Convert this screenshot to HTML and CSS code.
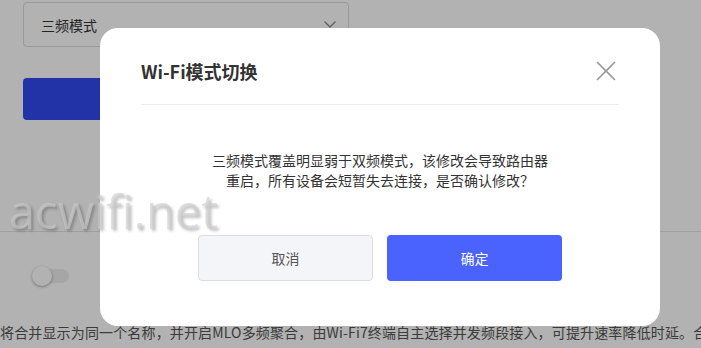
FILE: index.html
```html
<!DOCTYPE html>
<html lang="zh-CN">
<head>
  <meta charset="UTF-8">
  <title>Wi-Fi模式切换</title>
  <link rel="stylesheet" href="styles.css">
</head>
<body>

  <div class="page">
    <div class="select">
      <span>三频模式</span>
      <svg class="chevron" width="12" height="7" viewBox="0 0 12 7">
        <path d="M0.5 0.5 L6 6 L11.5 0.5" fill="none" stroke="#888" stroke-width="1.3"/>
      </svg>
    </div>
    <button class="save-btn">保存</button>

    <div class="divider"></div>

    <div class="switch-row">
      <span class="switch"><span class="knob"></span></span>
    </div>

    <p class="hint">将合并显示为同一个名称，并开启MLO多频聚合，由Wi-Fi7终端自主选择并发频段接入，可提升速率降低时延。合</p>
  </div>

  <div class="mask"></div>

  <div class="dialog">
    <div class="dialog-head">
      <h3 class="dialog-title">Wi-Fi模式切换</h3>
      <svg class="close" width="20" height="20" viewBox="0 0 20 20">
        <path d="M1 1 L19 19 M19 1 L1 19" stroke="#999" stroke-width="1.6"/>
      </svg>
    </div>
    <div class="dialog-body">
      <p class="dialog-text">三频模式覆盖明显弱于双频模式，该修改会导致路由器重启，所有设备会短暂失去连接，是否确认修改？</p>
    </div>
    <div class="dialog-foot">
      <button class="btn btn-cancel">取消</button>
      <button class="btn btn-ok">确定</button>
    </div>
  </div>

  <div class="watermark">acwifi.net</div>

</body>
</html>
```

FILE: styles.css
```css
body {
  margin: 0;
  font-family: "Noto Sans CJK SC", "Liberation Sans", sans-serif;
  background: #ffffff;
  overflow: hidden;
}
.page {
  padding-top: 2px;
}
.select {
  margin-left: 23px;
  width: 326px;
  height: 45px;
  box-sizing: border-box;
  border: 1px solid #dcdcdc;
  border-radius: 4px;
  padding: 0 12px 0 17px;
  display: flex;
  align-items: center;
  justify-content: space-between;
  font-size: 14px;
  color: #333;
}
.save-btn {
  display: block;
  margin: 31px 0 0 23px;
  width: 326px;
  height: 42px;
  border: none;
  border-radius: 4px;
  background: #324af0;
  color: #fff;
  font-size: 14px;
}
.divider {
  margin-top: 111px;
  height: 1px;
  background: #e6e6e6;
}
.switch-row {
  padding: 34px 0 0 32px;
  height: 56px;
}
.switch {
  position: relative;
  display: inline-block;
  width: 37px;
  height: 20px;
}
.switch::before {
  content: "";
  position: absolute;
  left: 10px;
  right: 0;
  top: 3px;
  height: 14px;
  border-radius: 7px;
  background: #eeeeee;
}
.knob {
  position: absolute;
  left: 0;
  top: 0;
  width: 20px;
  height: 20px;
  border-radius: 50%;
  background: #ffffff;
  box-shadow: 0 1px 3px rgba(0,0,0,0.35);
}
.hint {
  margin: 0;
  white-space: nowrap;
  font-size: 14px;
  line-height: 20px;
  letter-spacing: 0.15px;
  color: #555;
}
.mask {
  position: fixed;
  inset: 0;
  background: rgba(0,0,0,0.3);
}
.dialog {
  position: absolute;
  left: 100px;
  top: 28px;
  width: 560px;
  height: 298px;
  box-sizing: border-box;
  background: #fff;
  border-radius: 18px;
  padding: 0 41px;
}
.dialog-head {
  display: flex;
  align-items: center;
  justify-content: space-between;
  padding: 30px 0 20px;
  border-bottom: 1px solid #ececec;
}
.dialog-title {
  margin: 0;
  font-size: 18px;
  line-height: 26px;
  font-weight: bold;
  color: #333;
}
.close {
  margin-right: 3px;
}
.dialog-body {
  padding-top: 45px;
}
.dialog-text {
  margin: 0 auto;
  width: 340px;
  text-align: center;
  font-size: 14px;
  line-height: 20px;
  color: #333;
}
.dialog-foot {
  display: flex;
  justify-content: center;
  gap: 14px;
  margin-top: 45px;
}
.btn {
  width: 175px;
  height: 46px;
  border-radius: 4px;
  font-size: 14px;
  font-family: inherit;
}
.btn-cancel {
  background: #f4f5f8;
  border: 1px solid #dddddd;
  color: #555;
}
.btn-ok {
  background: #4a62fe;
  border: none;
  color: #fff;
}
.watermark {
  position: absolute;
  left: 9px;
  top: 183px;
  font-family: "Open Sans", sans-serif;
  font-size: 47px;
  line-height: 56px;
  color: rgba(205,205,205,0.6);
  text-shadow: 2px 2px 3px rgba(0,0,0,0.25);
}
```
